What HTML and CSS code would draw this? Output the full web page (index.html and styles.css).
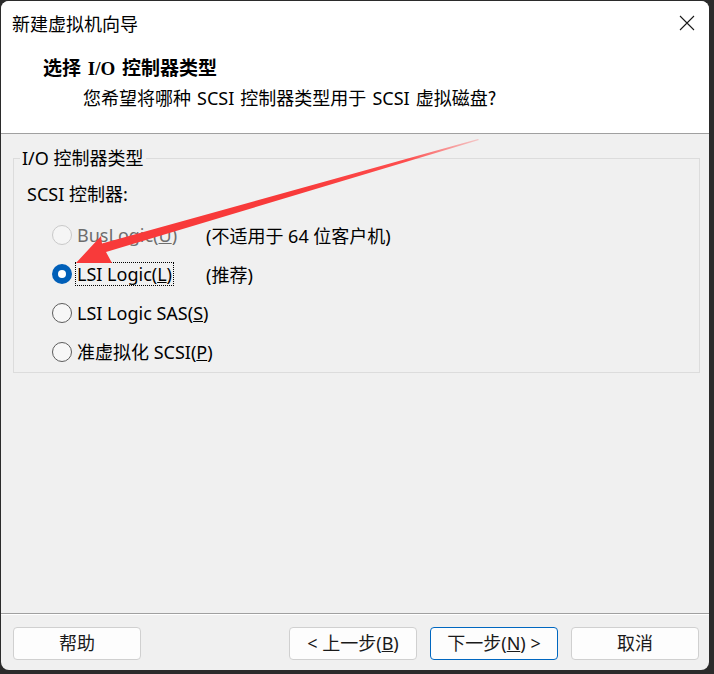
FILE: index.html
```html
<!DOCTYPE html>
<html lang="zh-CN">
<head>
<meta charset="utf-8">
<title>新建虚拟机向导</title>
<link rel="stylesheet" href="styles.css">
</head>
<body>
<div class="window">
  <div class="head">
    <div class="titlebar">
      <span class="wintitle">新建虚拟机向导</span>
      <svg class="close" width="16" height="16" viewBox="0 0 16 16"><path d="M1 1 L15 15 M15 1 L1 15" stroke="#1a1a1a" stroke-width="1.1" fill="none"/></svg>
    </div>
    <div class="h-title">选择 <span class="lat">I/O</span> 控制器类型</div>
    <div class="h-sub">您希望将哪种 <span class="lat">SCSI</span> 控制器类型用于 <span class="lat">SCSI</span> 虚拟磁盘?</div>
  </div>
  <div class="body">
    <fieldset class="group">
      <legend class="legend">I/O 控制器类型</legend>
      <div class="grp-label">SCSI 控制器:</div>
      <div class="opt">
        <span class="radio disabled"></span>
        <span class="lbl"><span class="txt gray">BusLogic(<u>U</u>)</span></span>
        <span class="note">(不适用于 64 位客户机)</span>
      </div>
      <div class="opt">
        <span class="radio checked"></span>
        <span class="lbl"><span class="txt focus">LSI Logic(<u>L</u>)</span></span>
        <span class="note">(推荐)</span>
      </div>
      <div class="opt">
        <span class="radio"></span>
        <span class="lbl"><span class="txt">LSI Logic SAS(<u>S</u>)</span></span>
      </div>
      <div class="opt">
        <span class="radio"></span>
        <span class="lbl"><span class="txt">准虚拟化 SCSI(<u>P</u>)</span></span>
      </div>
    </fieldset>
  </div>
  <div class="footer">
    <button class="btn">帮助</button>
    <span class="spacer"></span>
    <button class="btn">&lt; 上一步(<u>B</u>)</button>
    <button class="btn default">下一步(<u>N</u>) &gt;</button>
    <button class="btn">取消</button>
  </div>
</div>
<svg class="arrow" width="714" height="674" viewBox="0 0 714 674">
  <defs>
    <linearGradient id="fade" gradientUnits="userSpaceOnUse" x1="478" y1="139" x2="300" y2="194">
      <stop offset="0" stop-color="#ff4444" stop-opacity="0.25"/>
      <stop offset="0.4" stop-color="#ff3c3c" stop-opacity="0.9"/>
      <stop offset="1" stop-color="#f83a3a"/>
    </linearGradient>
  </defs>
  <polygon fill="url(#fade)" points="76,263 101,236 102,243.5 478,139 479,140 106,252 112,263"/>
</svg>
</body>
</html>
```
FILE: styles.css
```css
html, body {
  margin: 0;
  padding: 0;
}
body {
  width: 714px;
  height: 674px;
  background: #2b2b2b;
  overflow: hidden;
  position: relative;
  font-family: "Noto Sans", "Noto Sans CJK SC", sans-serif;
  font-size: 18px;
  color: #000;
}
.window {
  margin: 1px 0 0 1px;
  width: 708px;
  height: 669px;
  border-radius: 8px;
  background: #f0f0f0;
  overflow: hidden;
  display: flex;
  flex-direction: column;
}
.head {
  background: #fff;
  height: 132px;
  border-bottom: 1px solid #a0a0a0;
  flex: none;
}
.titlebar {
  height: 44px;
  display: flex;
  align-items: center;
  padding-left: 11px;
}
.wintitle {
  font-family: "Noto Sans CJK SC", sans-serif;
  font-size: 18px;
  line-height: 24px;
}
.close {
  margin-left: auto;
  margin-right: 14px;
}
.h-title {
  margin: 12px 0 0 42px;
  font-family: "Liberation Serif", "Noto Sans CJK SC", serif;
  font-weight: bold;
  font-size: 19px;
  line-height: 24px;
  word-spacing: 2px;
}
.h-title .lat {
  font-family: "Liberation Serif", serif;
}
.h-sub {
  margin: 4px 0 0 82px;
  font-family: "Noto Sans CJK SC", sans-serif;
  font-size: 18px;
  line-height: 24px;
  word-spacing: 2px;
}
.h-sub .lat {
  font-family: "Noto Sans", sans-serif;
}
.body {
  flex: none;
  padding: 12px 0 0 12px;
}
.group {
  margin: 0;
  padding: 0 0 1px 0;
  width: 687px;
  box-sizing: border-box;
  border: 1px solid #dcdcdc;
  min-inline-size: 0;
}
.legend {
  margin-left: 6px;
  padding: 0 2px;
  line-height: 24px;
  font-size: 18px;
}
.grp-label {
  margin: 12px 0 9px 13px;
  line-height: 24px;
}
.opt {
  height: 39px;
  display: flex;
  align-items: center;
  padding-left: 38px;
}
.radio {
  width: 20px;
  height: 20px;
  box-sizing: border-box;
  border-radius: 50%;
  border: 1px solid #5c5c5c;
  background: #f7f7f7;
  flex: none;
  position: relative;
}
.radio.disabled {
  border-color: #c9c9c9;
  background: #f5f5f5;
}
.radio.checked {
  border: none;
  background: #005fb8;
}
.radio.checked::after {
  content: "";
  position: absolute;
  left: 6px;
  top: 6px;
  width: 8px;
  height: 8px;
  border-radius: 50%;
  background: #fff;
}
.lbl {
  width: 131px;
  margin-left: 3px;
  flex: none;
  display: flex;
}
.txt {
  padding: 0 1px;
  line-height: 22px;
  border: 1px dotted transparent;
  white-space: nowrap;
}
.txt.focus {
  border-color: #000;
}
.txt.gray {
  color: #6d6d6d;
}
.note {
  white-space: nowrap;
}
.footer {
  margin-top: auto;
  flex: none;
  border-top: 1px solid #a0a0a0;
  box-shadow: inset 0 1px 0 #fff;
  padding: 13px 10px 10px 12px;
  display: flex;
  gap: 13px;
}
.spacer {
  flex: 1;
}
.btn {
  width: 128px;
  height: 33px;
  box-sizing: border-box;
  background: #fdfdfd;
  border: 1px solid #d0d0d0;
  border-radius: 4px;
  font-family: "Noto Sans", "Noto Sans CJK SC", sans-serif;
  font-size: 18px;
  color: #1a1a1a;
  padding: 0;
  line-height: 31px;
}
.btn.default {
  border-color: #0067c0;
}
.arrow {
  position: absolute;
  left: 0;
  top: 0;
  pointer-events: none;
}
```
